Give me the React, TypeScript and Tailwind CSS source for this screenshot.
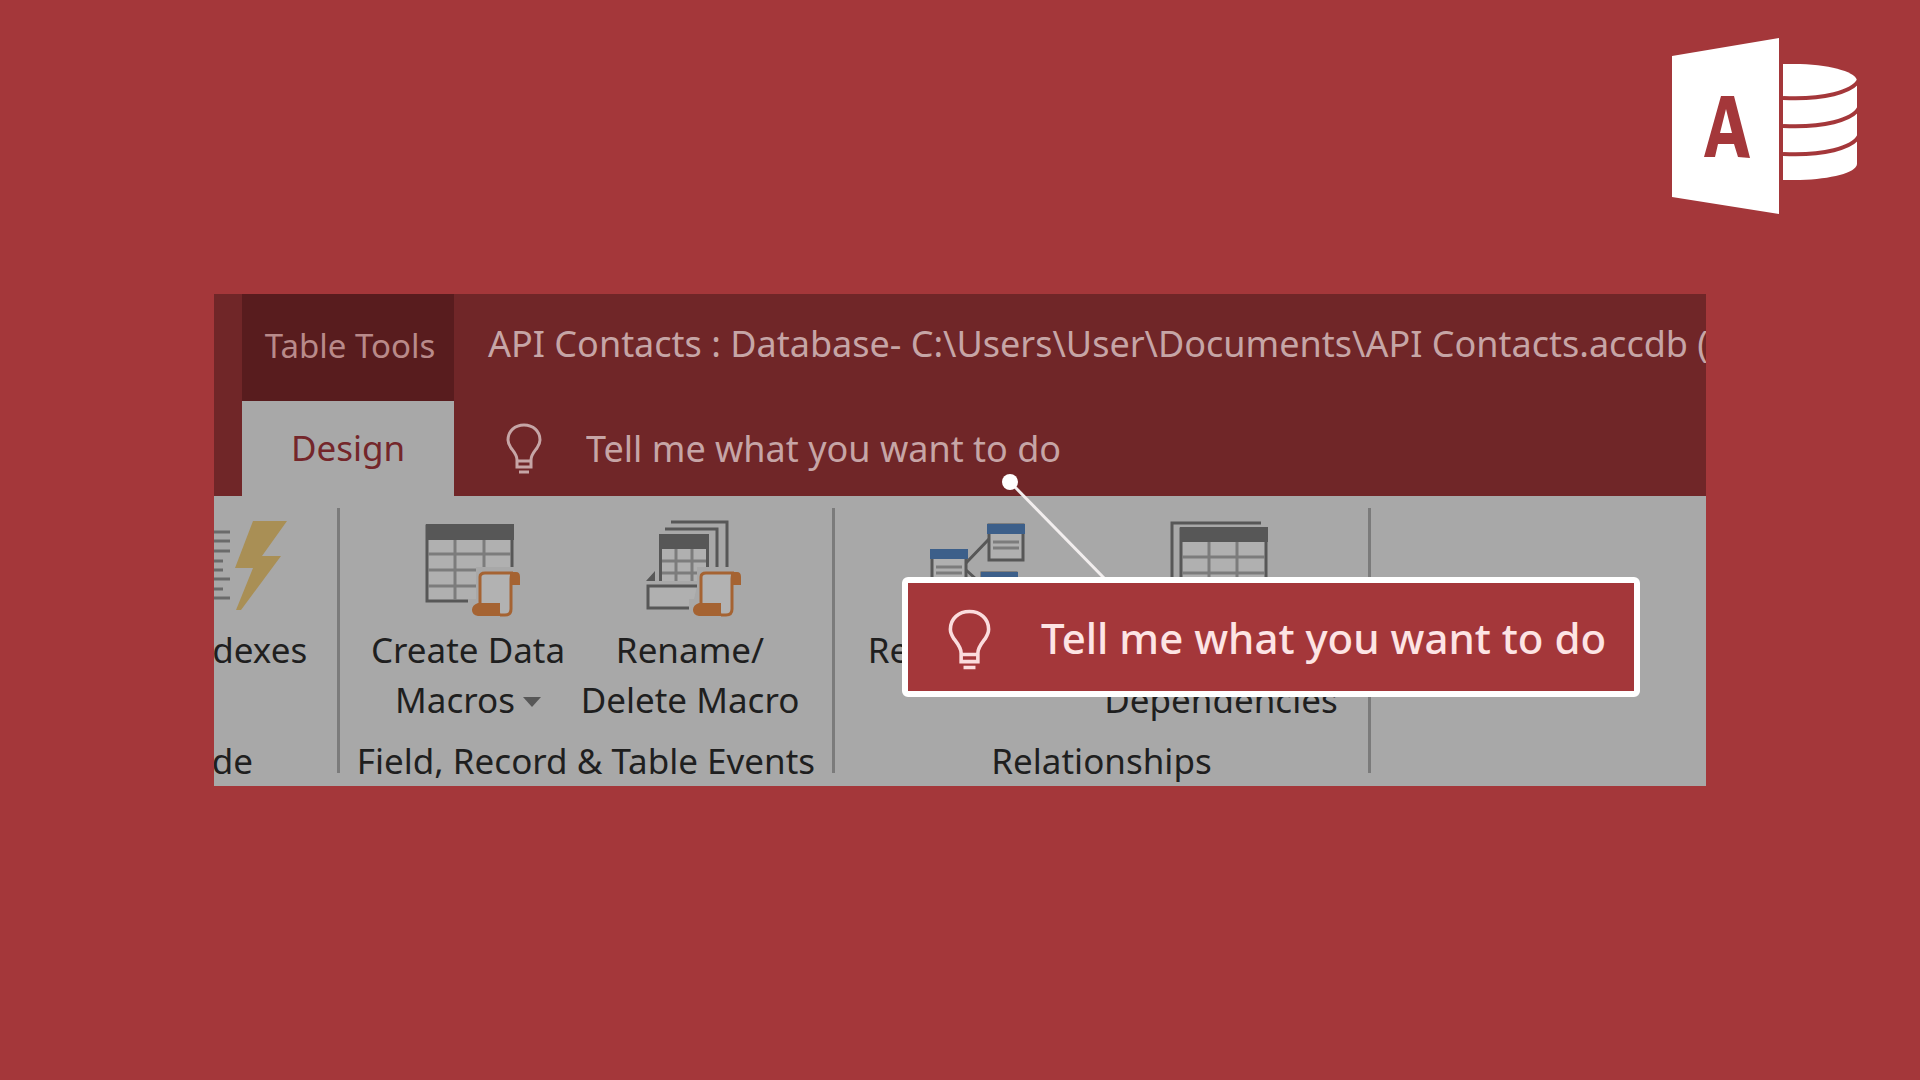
import type { ReactNode } from "react";

function AccessLogo() {
  return (
    <svg viewBox="0 0 186 176" className="h-[176px] w-[186px]" role="img" aria-label="Microsoft Access">
      <path fill="#fff" d="M0 18 107 0v176L0 159z" />
      <path
        fill="#a4373a"
        fillRule="evenodd"
        d="M49 58h13l16 62-12-1-4-13H46l-3 13H32zM54 71l-6 24h12z"
      />
      <path fill="#fff" d="M111 26h17c34 1 57 9 57 17v83c-1 9-26 15-57 16h-17z" />
      <g fill="none" stroke="#a4373a" strokeWidth="4">
        <path d="M111 60c40 2 70-6 76-18" />
        <path d="M111 88c40 2 70-6 76-18" />
        <path d="M111 116c40 2 70-6 76-18" />
      </g>
    </svg>
  );
}

function BulbIcon({ className }: { className: string }) {
  return (
    <svg viewBox="0 0 36 51" className={className} fill="none" stroke="currentColor" strokeWidth="3" aria-hidden="true">
      <path d="M11 44v-7c0-5-3-8-6-12-2-3-3-5-3-8C2 8 9 2 18 2s16 6 16 15c0 3-1 5-3 8-3 4-6 7-6 12v7z" />
      <path d="M11 38h14M13 49h10" />
    </svg>
  );
}

// orange macro scroll shared by the two macro icons
function Scroll({ x }: { x: number }) {
  return (
    <g transform={`translate(${x} 51)`}>
      <path fill="#a8a8a8" d="M4-4h48v22h-6v30H-4V28h8z" />
      <path fill="#b2b2b2" stroke="#a56332" strokeWidth="3" d="M8 32V6q0-4 5-4h28q-2 1-2 6v30q0 6-6 6h-5" />
      <path fill="#a56332" d="M38 1h6q4 0 4 5v8H38zM6 32h22v9q0 3 3 4H6q-6-1-6-6t6-7z" />
    </g>
  );
}

function IndexesIcon() {
  return (
    <svg viewBox="0 0 88 97" className="h-[97px] w-[88px]" aria-hidden="true">
      <path
        stroke="#6a6a6a"
        strokeWidth="3"
        d="M10 12h21M10 21h21M10 31h21M10 41h14M10 50h14M10 59h21M10 69h14M10 78h21"
      />
      <path fill="#a98f55" d="M54 1h34L63 36h19L42 90h-5l17-42H36z" />
    </svg>
  );
}

function CreateMacroIcon() {
  return (
    <svg viewBox="0 0 108 97" className="h-[97px] w-[108px]" aria-hidden="true">
      <path fill="#b0b0b0" stroke="#575757" strokeWidth="3" d="M13 6h85v75H13z" />
      <path stroke="#7c7c7c" strokeWidth="3" d="M41 19v61M70 19v61M14 34h83M14 50h83M14 66h83" />
      <path fill="#575757" d="M12 4h88v16H12z" />
      <Scroll x={58} />
    </svg>
  );
}

function RenameMacroIcon() {
  return (
    <svg viewBox="0 0 104 97" className="h-[97px] w-[104px]" aria-hidden="true">
      <path fill="none" stroke="#575757" strokeWidth="3" d="M33 2h56v46M27 9h52v39" />
      <path fill="#b0b0b0" d="M22 28h48v33H22z" />
      <path stroke="#7c7c7c" strokeWidth="3" d="M38 28v33M54 28v33M22 41h48M22 53h48" />
      <path fill="#575757" d="M21 14h50v35h-3V29H24v32h-3zM17 51v10H8z" />
      <path fill="#b0b0b0" stroke="#575757" strokeWidth="3" d="M59 66H10v22h44" />
      <Scroll x={55} />
    </svg>
  );
}

function RelationshipsIcon() {
  return (
    <svg viewBox="0 0 100 97" className="h-[97px] w-[100px]" aria-hidden="true">
      <path stroke="#575757" strokeWidth="3" d="M38 43l23-24M38 50l20 18" />
      <path fill="#b0b0b0" stroke="#575757" strokeWidth="3" d="M61 5h34v35H61zM4 31h34v35H4zM54 53h34v35H54z" />
      <path fill="#3c5f8a" d="M59 4h38v10H59zM2 29h38v10H2zM53 52h37v10H53z" />
      <path stroke="#7c7c7c" strokeWidth="3" d="M65 22h26M65 28h26M8 47h26M8 53h26M59 70h26M59 76h26" />
    </svg>
  );
}

function DependenciesIcon() {
  return (
    <svg viewBox="0 0 104 97" className="h-[97px] w-[104px]" aria-hidden="true">
      <path fill="none" stroke="#575757" strokeWidth="3" d="M3 80V3h89" />
      <path fill="#b0b0b0" stroke="#575757" strokeWidth="3" d="M12 9h85v75H12z" />
      <path stroke="#7c7c7c" strokeWidth="3" d="M40 22v61M68 22v61M13 37h83M13 53h83M13 69h83" />
      <path fill="#575757" d="M11 7h88v15H11z" />
    </svg>
  );
}

function RibbonButton({ icon, className, children }: { icon: ReactNode; className: string; children: ReactNode }) {
  return (
    <button type="button" className={`flex shrink-0 flex-col items-center gap-2 text-[35px] leading-[50px] whitespace-nowrap ${className}`}>
      {icon}
      <span className="h-[100px]">{children}</span>
    </button>
  );
}

type RibbonGroupProps = {
  label: string;
  className: string;
  labelClassName?: string;
  children: ReactNode;
};

function RibbonGroup({ label, className, labelClassName = "self-center", children }: RibbonGroupProps) {
  return (
    <section aria-label={label} className={`flex shrink-0 flex-col border-r-3 border-[#7b7b7b] pt-3 ${className}`}>
      <div className="flex">{children}</div>
      <h2 className={`mt-4 h-9 text-[35px] leading-10 whitespace-nowrap ${labelClassName}`}>{label}</h2>
    </section>
  );
}

function Callout() {
  return (
    <>
      <svg viewBox="0 0 110 106" className="absolute top-[180px] right-[594px] h-[106px] w-[110px]" aria-hidden="true">
        <path stroke="#f2eeee" strokeWidth="3" d="M8 8l96 98" />
        <circle cx="8" cy="8" r="8" fill="#fff" />
      </svg>
      <div className="absolute top-[283px] right-[66px] flex h-[120px] w-[738px] items-center gap-[50px] rounded-md border-6 border-white bg-[#a4373a] pt-1 pl-10">
        <BulbIcon className="h-[61px] w-[43px] text-[#fbdcdd]" />
        <p className="pb-1 text-[42px] font-medium whitespace-nowrap text-[#fde4e4]">Tell me what you want to do</p>
      </div>
    </>
  );
}

export default function App() {
  return (
    <div className="min-h-screen overflow-hidden bg-[#a4373a] font-['Noto_Sans',sans-serif]">
      <header className="flex justify-end pt-[38px] pr-[62px]">
        <AccessLogo />
      </header>

      <main className="relative mx-[214px] mt-20 overflow-hidden bg-[#702628]">
        <div className="flex pl-7">
          <div className="w-[212px] shrink-0">
            <div className="flex h-[107px] items-center justify-center bg-[#581c1e] pb-1 pl-1 text-[33px] whitespace-nowrap text-[#b98a8a]">
              Table Tools
            </div>
            <button type="button" className="h-[95px] w-full bg-[#a8a8a8] text-[35px] text-[#74262a]">
              Design
            </button>
          </div>

          <div className="min-w-0 flex-1 pl-[34px] text-[#c6a5a6]">
            <h1 className="flex h-[107px] items-center pb-2 text-[36px] whitespace-nowrap">
              API Contacts : Database- C:\Users\User\Documents\API Contacts.accdb (
            </h1>
            <label className="flex h-[95px] items-center gap-[44px] pl-[18px]">
              <BulbIcon className="h-[51px] w-9" />
              <input
                type="text"
                aria-label="Tell me what you want to do"
                placeholder="Tell me what you want to do"
                className="w-[520px] text-[36px] outline-none placeholder:text-[#c6a5a6]"
              />
            </label>
          </div>
        </div>

        <div className="flex h-[290px] bg-[#a8a8a8] pb-[13px] pt-3 text-[#1f1f1f]">
          <RibbonGroup label="Show/Hide" className="w-[126px] items-end" labelClassName="pr-[84px]">
            <RibbonButton icon={<IndexesIcon />} className="w-[188px]">
              Indexes
            </RibbonButton>
          </RibbonGroup>

          <RibbonGroup label="Field, Record & Table Events" className="w-[495px]">
            <RibbonButton icon={<CreateMacroIcon />} className="ml-5 w-[216px]">
              Create Data
              <br />
              Macros
              <svg viewBox="0 0 18 10" className="mb-1 ml-2 inline h-[10px] w-[18px] align-middle" aria-hidden="true">
                <path fill="#575757" d="M0 0h18l-9 10z" />
              </svg>
            </RibbonButton>
            <RibbonButton icon={<RenameMacroIcon />} className="w-[228px]">
              Rename/
              <br />
              Delete Macro
            </RibbonButton>
          </RibbonGroup>

          <RibbonGroup label="Relationships" className="w-[536px]">
            <RibbonButton icon={<RelationshipsIcon />} className="ml-[30px] w-[226px]">
              Relationships
            </RibbonButton>
            <RibbonButton icon={<DependenciesIcon />} className="w-[260px]">
              Object
              <br />
              Dependencies
            </RibbonButton>
          </RibbonGroup>
        </div>

        <Callout />
      </main>
    </div>
  );
}
